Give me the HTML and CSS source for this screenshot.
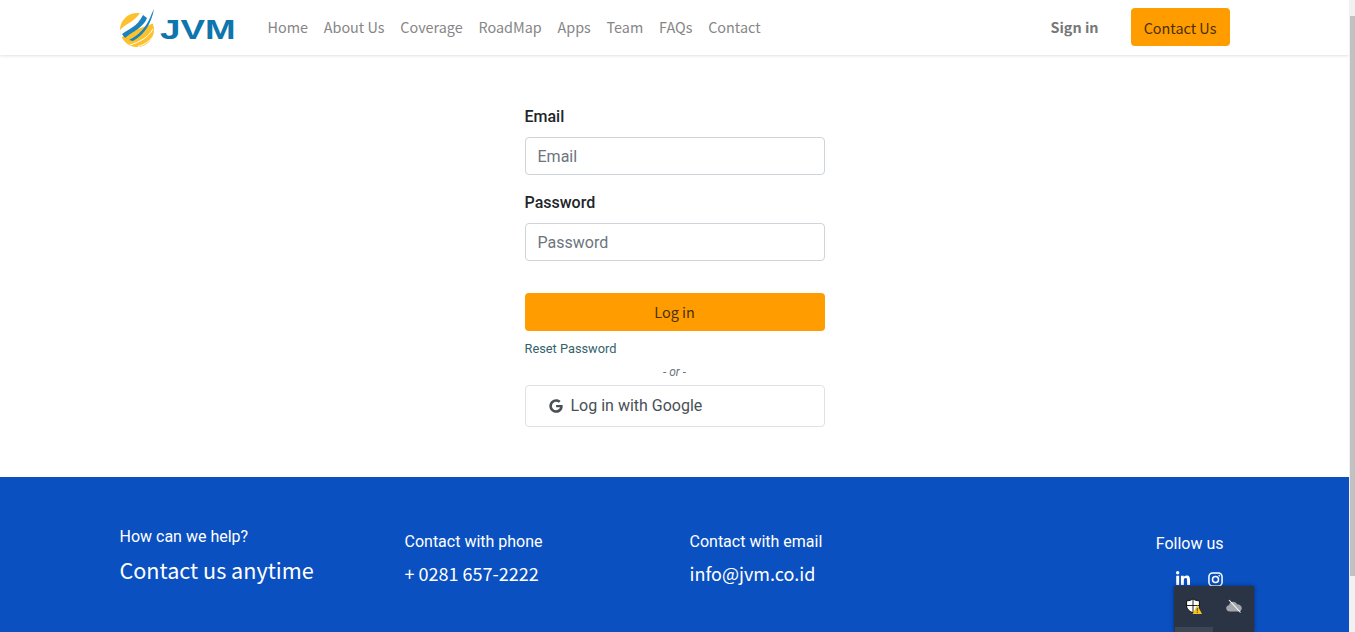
FILE: index.html
```html
<!DOCTYPE html>
<html lang="en">
<head>
  <meta charset="UTF-8" />
  <title>JVM - Log in</title>
  <link rel="stylesheet" href="styles.css">
</head>
<body>
  <div class="page">
    <header class="navbar">
      <div class="container nav-inner">
        <a class="brand" href="#">
          <svg class="brand-mark" viewBox="0 0 36 38" width="36" height="38">
            <circle cx="17" cy="21" r="17" fill="#fcc22d"/>
            <path d="M0 21 C8 13 14 13 20 4 L31 8 L34 14 C22 19 9 22 1 29 Z" fill="#fff"/>
            <path d="M2 25 C10 19 17 18 23 6 L27 9 C24 18 12 23 5 29 Z" fill="#1a82bd"/>
            <path d="M9 31 C19 26 27 18 32 4 L34 0 C31 15 25 25 13 32 Z" fill="#1a82bd"/>
            <path d="M10 36 C19 33 28 29 33 20" stroke="#fff" stroke-width="1" fill="none"/>
            <path d="M18 37.5 C25 35.5 30 32 34 26" stroke="#fff" stroke-width="1" fill="none"/>
          </svg>
          <span class="brand-name">JVM</span>
        </a>
        <nav class="nav-links">
          <a href="#">Home</a>
          <a href="#">About Us</a>
          <a href="#">Coverage</a>
          <a href="#">RoadMap</a>
          <a href="#">Apps</a>
          <a href="#">Team</a>
          <a href="#">FAQs</a>
          <a href="#">Contact</a>
        </nav>
        <a class="sign-in" href="#">Sign in</a>
        <a class="btn-orange nav-contact" href="#">Contact Us</a>
      </div>
    </header>

    <main class="login">
      <form class="login-form">
        <label class="field-label" for="email">Email</label>
        <input class="field-input" id="email" type="text" placeholder="Email" />
        <label class="field-label" for="password">Password</label>
        <input class="field-input" id="password" type="password" placeholder="Password" />
        <button class="btn-orange login-btn" type="button">Log in</button>
        <a class="reset-link" href="#">Reset Password</a>
        <div class="or-line">- or -</div>
        <button class="google-btn" type="button">
          <svg viewBox="0 0 488 512" width="14" height="14"><path fill="#495057" d="M488 261.8C488 403.3 391.1 504 248 504 110.8 504 0 393.2 0 256S110.8 8 248 8c66.8 0 123 24.5 166.3 64.9l-67.5 64.9C258.5 52.6 94.3 116.6 94.3 256c0 86.5 69.1 156.6 153.7 156.6 98.2 0 135-70.4 140.8-106.9H248v-85.3h236.1c2.3 12.7 3.9 24.9 3.9 41.4z"/></svg>
          <span class="google-label">Log in with Google</span>
        </button>
      </form>
    </main>

    <footer class="footer">
      <div class="container footer-cols">
        <div class="footer-col col-help">
          <div class="footer-small">How can we help?</div>
          <div class="footer-big">Contact us anytime</div>
        </div>
        <div class="footer-col">
          <div class="footer-title">Contact with phone</div>
          <div class="footer-value">+ 0281 657-2222</div>
        </div>
        <div class="footer-col">
          <div class="footer-title">Contact with email</div>
          <div class="footer-value">info@jvm.co.id</div>
        </div>
        <div class="footer-col col-follow">
          <div class="footer-title">Follow us</div>
          <div class="social">
            <svg viewBox="0 0 448 512" width="16" height="16"><path fill="#fff" d="M100.28 448H7.4V148.9h92.88zM53.79 108.1C24.09 108.1 0 83.5 0 53.8a53.79 53.79 0 0 1 107.58 0c0 29.7-24.1 54.3-53.79 54.3zM447.9 448h-92.68V302.4c0-34.7-.7-79.2-48.29-79.2-48.29 0-55.69 37.7-55.69 76.7V448h-92.78V148.9h89.08v40.8h1.3c12.4-23.5 42.69-48.3 87.88-48.3 94 0 111.28 61.9 111.28 142.3V448z"/></svg>
            <svg viewBox="0 0 16 16" width="15" height="15" fill="none" stroke="#fff" stroke-width="1.6"><rect x="1" y="1" width="14" height="14" rx="4"/><circle cx="8" cy="8" r="3.2"/><circle cx="12" cy="4" r=".5" fill="#fff" stroke-width="1"/></svg>
          </div>
        </div>
      </div>
    </footer>
  </div>

  <div class="scrollbar"><div class="scroll-thumb"></div></div>

  <!-- tray popup lying over the footer -->
  <div class="tray">
    <svg class="tray-icon" viewBox="0 0 16 16" width="16" height="16">
      <path d="M7 .8 C9 2.3 11 2.8 13.4 2.8 L13.4 8 C13.4 11 10.5 13.4 7 14.8 C3.5 13.4 .6 11 .6 8 L.6 2.8 C3 2.8 5 2.3 7 .8 Z" fill="#fff" stroke="#0b0b0b" stroke-width="1"/>
      <path d="M7 1V14.5M1 7.5H13" stroke="#0b0b0b" stroke-width=".9"/>
      <path d="M11.3 7 L16 16 L6.5 16 Z" fill="#f7c21a"/>
      <path d="M11.3 10V13.4M11.3 14V15" stroke="#2b3444" stroke-width=".8"/>
    </svg>
    <svg class="tray-icon" viewBox="0 0 16 16" width="16" height="16">
      <path d="M4 13.5 C1.5 13.5 .2 12 .2 10.2 C.2 8.6 1.4 7.5 3 7.3 C3.5 5 5 3.8 7 3.8 C9 3.8 10.5 4.8 11 6.3 C13.7 6.3 15.8 8 15.8 10.2 C15.8 12.2 14.2 13.5 12.5 13.5 Z" fill="#a3a7ad"/>
      <path d="M3 2 L14.5 14.5" stroke="#fff" stroke-width="1.1"/>
    </svg>
    <div class="tray-hover"></div>
  </div>
</body>
</html>
```

FILE: styles.css
```css
* {
  box-sizing: border-box;
}
html, body {
  margin: 0;
  height: 632px;
  overflow: hidden;
}
body {
  font-family: "Noto Sans CJK SC", "Noto Sans", sans-serif;
  background: #fff;
  color: #212529;
  position: relative;
}
a {
  text-decoration: none;
}
.page {
  width: 1349px;
}
.container {
  width: 1140px;
  margin: 0 auto;
  padding: 0 15px;
}

/* top bar */
.navbar {
  height: 55px;
  background: #fff;
  box-shadow: 0 1px 3px rgba(0, 0, 0, 0.12);
}
.nav-inner {
  display: flex;
  align-items: center;
  height: 54px;
}
.brand {
  display: flex;
  align-items: center;
  gap: 4px;
  width: 148px;
}
.brand-mark {
  flex: none;
  margin-top: 2px;
}
.brand-name {
  font-family: "Liberation Sans", sans-serif;
  font-weight: 700;
  font-size: 27px;
  line-height: 27px;
  margin-top: 7px;
  color: #0f75ad;
  transform: scaleX(1.36);
  transform-origin: left center;
}
.nav-links {
  display: flex;
  gap: 15.75px;
  flex: 1;
  margin-bottom: 2px;
}
.nav-links a {
  font-size: 14.4px;
  color: #868686;
}
.sign-in {
  font-size: 14.4px;
  font-weight: 700;
  color: #777;
  margin-right: 32px;
  margin-bottom: 2px;
}
.btn-orange {
  background: #ff9c00;
  color: #4a3008;
  font-family: "Noto Sans CJK SC", sans-serif;
  font-size: 14.4px;
  border: none;
  border-radius: 4px;
}
.nav-contact {
  display: flex;
  align-items: center;
  justify-content: center;
  width: 99px;
  height: 38px;
}

/* login form */
.login {
  height: 422px;
  display: flex;
  justify-content: center;
  padding-top: 52px;
}
.login-form {
  width: 300px;
  display: flex;
  flex-direction: column;
  font-family: Roboto, sans-serif;
}
.field-label {
  font-size: 16px;
  font-weight: 500;
  line-height: 20px;
  margin-bottom: 10px;
  color: #212529;
}
.field-input {
  height: 38px;
  border: 1px solid #ced4da;
  border-radius: 4px;
  padding: 0 12px;
  font-family: Roboto, sans-serif;
  font-size: 16px;
  margin-bottom: 18px;
}
.field-input::placeholder {
  color: #6c757d;
}
.login-btn {
  height: 38px;
  margin-top: 14px;
  padding-bottom: 2px;
}
.reset-link {
  font-size: 12.8px;
  line-height: 15px;
  color: #35626b;
  margin-top: 10px;
}
.or-line {
  font-size: 12px;
  font-style: italic;
  line-height: 14px;
  color: #6c757d;
  text-align: center;
  margin-top: 9px;
}
.google-btn {
  display: flex;
  align-items: center;
  gap: 8px;
  height: 42px;
  margin-top: 6px;
  padding: 0 23px;
  background: #fff;
  border: 1px solid #dee2e6;
  border-radius: 4px;
  font-family: Roboto, sans-serif;
  font-size: 16px;
  color: #495057;
}
.google-label {
  margin-bottom: 2px;
}

/* footer */
.footer {
  height: 155px;
  background: #0a50c0;
  color: #fff;
}
.footer-cols {
  display: grid;
  grid-template-columns: 285px 285px 285px 255px;
}
.footer-small {
  font-family: Roboto, sans-serif;
  font-size: 16px;
  line-height: 20px;
  margin-top: 50px;
}
.footer-big {
  font-size: 21.6px;
  line-height: 30px;
  margin-top: 8px;
}
.footer-title {
  font-family: Roboto, sans-serif;
  font-size: 16px;
  line-height: 20px;
  margin-top: 55px;
}
.footer-value {
  font-size: 18px;
  line-height: 26px;
  margin-top: 8px;
}
.col-follow {
  display: flex;
  flex-direction: column;
  align-items: flex-end;
  padding-right: 7px;
}
.col-follow .footer-title {
  margin-top: 57px;
  margin-right: -1px;
}
.social {
  display: flex;
  align-items: center;
  gap: 17px;
  margin-top: 17px;
}

/* browser chrome */
.scrollbar {
  position: absolute;
  top: 0;
  right: 0;
  width: 6px;
  height: 632px;
  background: #f1f1f1;
}
.scroll-thumb {
  height: 560px;
  margin-top: 16px;
  margin-left: 1px;
  background: #c1c1c1;
}
.tray {
  position: absolute;
  left: 1174px;
  top: 586px;
  width: 80px;
  height: 46px;
  background: #2b3444;
  box-shadow: 0 0 4px rgba(0, 0, 0, 0.45);
  display: flex;
  gap: 24px;
  padding: 12px 12px 0;
}
.tray-hover {
  position: absolute;
  left: 1px;
  bottom: 0;
  width: 38px;
  height: 5px;
  background: #3d4655;
}
```
